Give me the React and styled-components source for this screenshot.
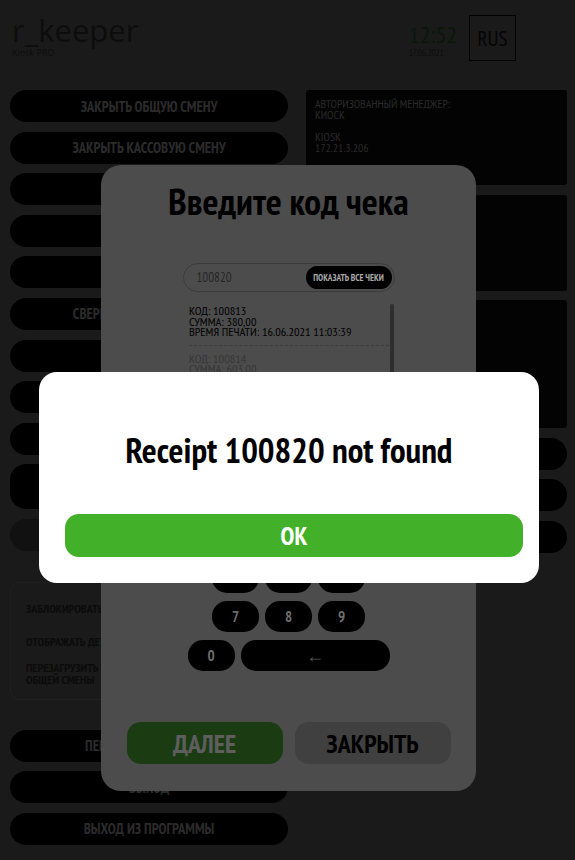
import styled, { createGlobalStyle } from 'styled-components'

const GlobalStyle = createGlobalStyle`
    html, body {
        margin: 0;
        padding: 0;
        background: #1a1a1a;
    }
    body {
        font-family: "PT Sans Narrow", "Open Sans", sans-serif;
        font-stretch: condensed;
    }
`

const Page = styled.div`
    width: 575px;
    height: 860px;
    box-sizing: border-box;
    padding: 0 8px 0 10px;
    overflow: hidden;
    background: #1a1a1a;
`

const Header = styled.header`
    display: flex;
    justify-content: space-between;
    align-items: flex-start;
    height: 90px;
    padding-right: 51px;
`

const Brand = styled.div`
    padding: 15px 0 0 2px;
    font-family: "Open Sans", sans-serif;
    font-stretch: normal;
    color: #0d0d0d;

    .logo {
        font-size: 31px;
        line-height: 30px;
    }
    .sub {
        font-size: 9px;
        line-height: 10px;
        margin-top: 3px;
    }
`

const HeaderRight = styled.div`
    display: flex;
    align-items: flex-start;
    gap: 12px;
    padding-top: 15px;
`

const Clock = styled.div`
    padding-top: 6px;
    color: #0b170b;

    .time {
        font-size: 24px;
        line-height: 27px;
    }
    .date {
        font-size: 9px;
        line-height: 9px;
        color: #0d0d0d;
    }
`

const LangBox = styled.div`
    width: 47px;
    height: 46px;
    box-sizing: border-box;
    border: 1px solid #000;
    display: flex;
    align-items: center;
    justify-content: center;
    font-size: 21px;
    color: #050505;
`

const Main = styled.div`
    display: grid;
    grid-template-columns: 278px 261px;
    column-gap: 18px;
`

const Column = styled.div`
    display: flex;
    flex-direction: column;
    gap: ${p => p.$gap || 9.6}px;
`

const MenuButton = styled.button`
    height: ${p => p.$tall ? 45 : 32}px;
    border: none;
    border-radius: 16px;
    background: ${p => p.$disabled ? '#111' : '#000'};
    color: #2b2b2b;
    font-family: inherit;
    font-weight: bold;
    font-size: 14.5px;
    text-transform: uppercase;
    padding: 0 12px;
`

const Settings = styled.div`
    margin: 31px 0 30px;
    height: 118px;
    box-sizing: border-box;
    border: 1px solid #202020;
    border-radius: 10px;
    padding: 20px 15px 0;
    display: flex;
    flex-direction: column;
`

const SettingRow = styled.div`
    margin-top: ${p => p.$space || 0}px;
    font-size: 12px;
    line-height: 12px;
    font-weight: bold;
    color: #0b0b0b;
    text-transform: uppercase;
`

const InfoPanel = styled.div`
    height: ${p => p.$h}px;
    box-sizing: border-box;
    background: #030303;
    border-radius: 3px;
    padding: 8px 9px;
    color: #2a2a2a;
    font-size: 11.7px;
    line-height: 11px;
    text-transform: uppercase;

    p {
        margin: 0 0 11px;
    }
`

const Dialog = styled.div`
    position: fixed;
    top: 165px;
    left: 101px;
    width: 375px;
    height: 626px;
    box-sizing: border-box;
    background: #4c4c4c;
    border-radius: 20px;
    display: flex;
    flex-direction: column;
    align-items: center;
    padding-bottom: 27px;
`

const DialogTitle = styled.h1`
    margin: 16px 0 0;
    font-size: 37.5px;
    line-height: 40px;
    font-weight: bold;
    color: #000;
`

const SearchField = styled.div`
    margin-top: 42px;
    width: 212px;
    height: 29px;
    box-sizing: border-box;
    border: 1px solid #3b3b3b;
    border-radius: 15px;
    display: flex;
    align-items: center;
    justify-content: space-between;
    padding: 0 2px 0 13px;
    font-size: 13px;
    color: #262626;
`

const ShowAllButton = styled.button`
    height: 23px;
    width: 86px;
    border: none;
    border-radius: 12px;
    background: #000;
    color: #a8a8a8;
    font-family: inherit;
    font-weight: bold;
    font-size: 9.2px;
    padding: 0;
`

const ReceiptList = styled.div`
    margin: 11px 0 0 6px;
    width: 205px;
    height: 208px;
    display: flex;
    gap: 1px;
    overflow: hidden;
`

const ReceiptItems = styled.div`
    flex: 1;
`

const Receipt = styled.div`
    padding: ${p => p.$first ? '2px 0 8px' : '7px 0 8px'};
    border-bottom: 1px dashed #3c3c3c;
    font-size: 12.3px;
    line-height: 10.5px;
    color: ${p => p.$active ? '#000' : '#363636'};
    text-transform: uppercase;

    div {
        white-space: nowrap;
    }
`

const ScrollThumb = styled.div`
    width: 4px;
    height: 120px;
    margin-top: 1px;
    background: #2f2f2f;
    border-radius: 2px;
`

const Keypad = styled.div`
    margin-top: 12px;
    display: flex;
    flex-direction: column;
    gap: 8px;
`

const KeyRow = styled.div`
    display: flex;
    justify-content: center;
    gap: 6px;
`

const Key = styled.button`
    width: ${p => p.$wide ? 149 : 47}px;
    height: 31px;
    border: none;
    border-radius: 15px;
    background: #000;
    color: ${p => p.$wide ? '#555' : '#6e6e6e'};
    font-family: inherit;
    font-weight: ${p => p.$wide ? 'normal' : 'bold'};
    font-size: ${p => p.$wide ? 18 : 15}px;
    padding: 0;
`

const DialogFooter = styled.div`
    margin-top: auto;
    display: flex;
    gap: 12px;
`

const FooterButton = styled.button`
    width: 156px;
    height: 42px;
    border: none;
    border-radius: 14px;
    background: ${p => p.$primary ? '#1b3b12' : '#404040'};
    color: ${p => p.$primary ? '#5e5e5e' : '#000'};
    font-family: inherit;
    font-weight: bold;
    font-size: 26px;
    padding: 0;
`

const Alert = styled.div`
    position: fixed;
    top: 372px;
    left: 39px;
    width: 500px;
    height: 211px;
    box-sizing: border-box;
    background: #fff;
    border-radius: 18px;
    padding-top: 58px;
    display: flex;
    flex-direction: column;
`

const AlertText = styled.div`
    text-align: center;
    font-size: 35px;
    line-height: 40px;
    font-weight: bold;
    color: #000;
`

const AlertButton = styled.button`
    margin: 44px 16px 0 26px;
    height: 43px;
    border: none;
    border-radius: 14px;
    background: #43b02a;
    color: #fff;
    font-family: inherit;
    font-weight: bold;
    font-size: 25px;
`

const leftButtons = [
    'Закрыть общую смену',
    'Закрыть кассовую смену',
    'X-отчет',
    'Отчеты',
    'Касса',
    'Сверка итогов по картам',
    'Стоп-лист',
    'Настройки',
    'Журнал',
]

export default function App() {
    return (
        <Page>
            <GlobalStyle />
            <Header>
                <Brand>
                    <div className='logo'>r_keeper</div>
                    <div className='sub'>Kiosk PRO</div>
                </Brand>
                <HeaderRight>
                    <Clock>
                        <div className='time'>12:52</div>
                        <div className='date'>17.06.2021</div>
                    </Clock>
                    <LangBox>RUS</LangBox>
                </HeaderRight>
            </Header>

            <Main>
                <div>
                    <Column>
                        {leftButtons.map(label => (
                            <MenuButton key={label}>{label}</MenuButton>
                        ))}
                        <MenuButton $tall>Печать отчета</MenuButton>
                        <MenuButton $disabled>Обновить</MenuButton>
                    </Column>
                    <Settings>
                        <SettingRow>Заблокировать киоск</SettingRow>
                        <SettingRow $space={21}>Отображать детали</SettingRow>
                        <SettingRow $space={14}>Перезагрузить после<br />общей смены</SettingRow>
                    </Settings>
                    <Column $gap={9.5}>
                        <MenuButton>Перезагрузить киоск</MenuButton>
                        <MenuButton>Выход</MenuButton>
                        <MenuButton>Выход из программы</MenuButton>
                    </Column>
                </div>

                <Column $gap={9.5}>
                    <InfoPanel $h={95}>
                        <p>Авторизованный менеджер:<br />Киоск</p>
                        <p>KIOSK<br />172.21.3.206</p>
                    </InfoPanel>
                    <InfoPanel $h={96} />
                    <InfoPanel $h={128} />
                    <MenuButton>Оплата</MenuButton>
                    <MenuButton>Меню</MenuButton>
                    <MenuButton>Заказы</MenuButton>
                </Column>
            </Main>

            <Dialog>
                <DialogTitle>Введите код чека</DialogTitle>
                <SearchField>
                    100820
                    <ShowAllButton>ПОКАЗАТЬ ВСЕ ЧЕКИ</ShowAllButton>
                </SearchField>
                <ReceiptList>
                    <ReceiptItems>
                        <Receipt $first $active>
                            <div>Код: 100813</div>
                            <div>Сумма: 380,00</div>
                            <div>Время печати: 16.06.2021 11:03:39</div>
                        </Receipt>
                        <Receipt>
                            <div>Код: 100814</div>
                            <div>Сумма: 603,00</div>
                            <div>Время печати: 16.06.2021 11:20:12</div>
                        </Receipt>
                        <Receipt>
                            <div>Код: 100815</div>
                            <div>Сумма: 145,00</div>
                            <div>Время печати: 16.06.2021 11:41:05</div>
                        </Receipt>
                        <Receipt>
                            <div>Код: 100816</div>
                            <div>Сумма: 520,00</div>
                            <div>Время печати: 16.06.2021 12:02:47</div>
                        </Receipt>
                    </ReceiptItems>
                    <ScrollThumb />
                </ReceiptList>
                <Keypad>
                    <KeyRow><Key>1</Key><Key>2</Key><Key>3</Key></KeyRow>
                    <KeyRow><Key>4</Key><Key>5</Key><Key>6</Key></KeyRow>
                    <KeyRow><Key>7</Key><Key>8</Key><Key>9</Key></KeyRow>
                    <KeyRow><Key>0</Key><Key $wide>←</Key></KeyRow>
                </Keypad>
                <DialogFooter>
                    <FooterButton $primary>ДАЛЕЕ</FooterButton>
                    <FooterButton>ЗАКРЫТЬ</FooterButton>
                </DialogFooter>
            </Dialog>

            <Alert>
                <AlertText>Receipt 100820 not found</AlertText>
                <AlertButton>OK</AlertButton>
            </Alert>
        </Page>
    )
}
